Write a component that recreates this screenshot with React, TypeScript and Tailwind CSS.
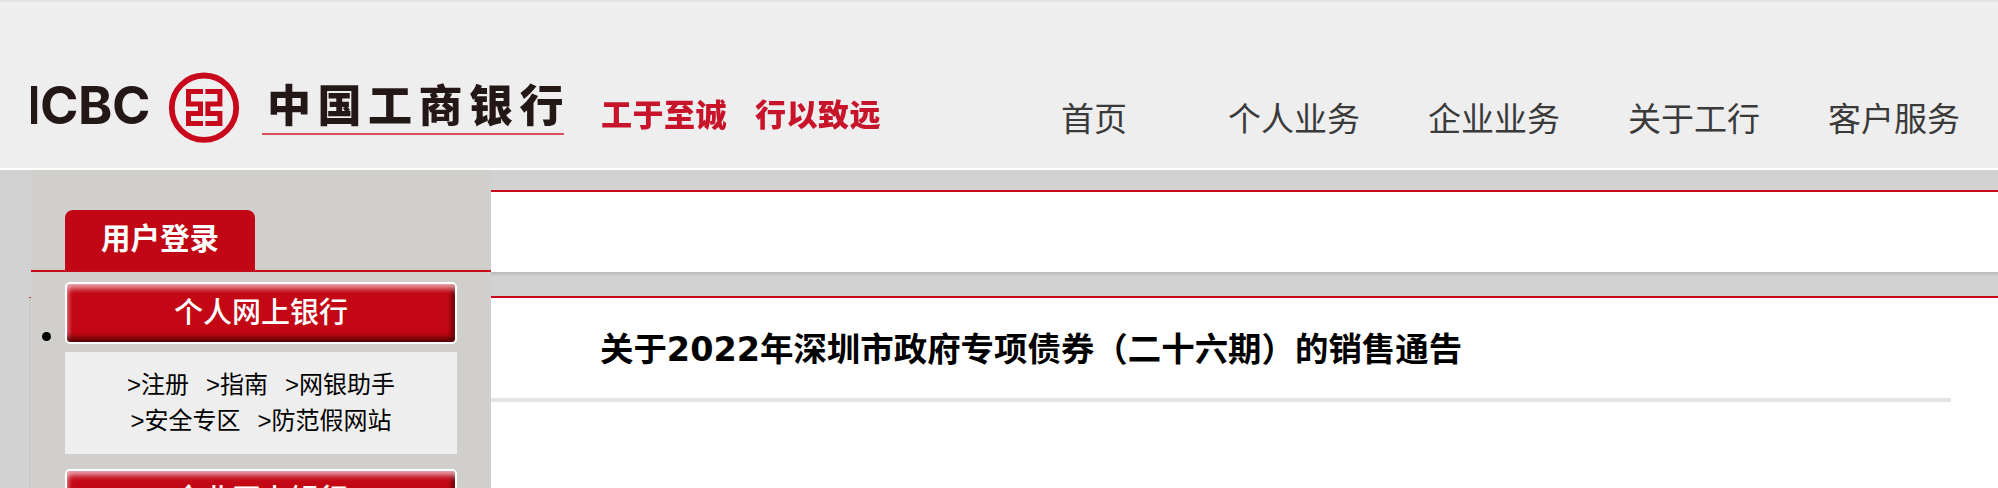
const baseFont = "font-['DejaVu_Sans','Noto_Sans_CJK_SC',sans-serif]";

const navItems = ["首页", "个人业务", "企业业务", "关于工行", "客户服务"];

function Emblem() {
  const left = "M26 22H43V27H31V34.5H43V49H31V54H43V59H26V44H38V39.5H26Z";
  const right = "M62.4 22H45.4V27H57.4V34.5H45.4V49H57.4V54H45.4V59H62.4V44H50.4V39.5H62.4Z";
  return (
    <svg width="90" height="80" viewBox="0 0 90 80" className="shrink-0">
      <circle cx="44" cy="40.7" r="32.2" fill="none" stroke="#c8091c" strokeWidth="5.8" />
      <path d={left} fill="#c8091c" />
      <path d={right} fill="#c8091c" />
    </svg>
  );
}

function Logo() {
  return (
    <div className="flex items-center blur-[0.6px] h-[80px] mt-[65px]">
      <div className="w-[129px] overflow-hidden font-['Inter',sans-serif] font-bold text-[52px] leading-none text-[#231815] mt-[-2px]">
        <div className="ml-[-5px] tracking-[-0.5px]">ICBC</div>
      </div>
      <Emblem />
      <div className="ml-[12px] w-[302px] border-b-2 border-[#d9505c] mt-[-2px] pb-[5px]">
        <div className="pl-[5px] font-['Noto_Sans_CJK_SC',sans-serif] font-black text-[44px] leading-[50px] tracking-[6.5px] text-[#231815] whitespace-nowrap">
          中国工商银行
        </div>
      </div>
      <div className="ml-[37px] mt-[11px] flex gap-[28px] font-['Noto_Sans_CJK_SC',sans-serif] font-black text-[31px] leading-none text-[#c8142a] tracking-[0.5px] whitespace-nowrap">
        <span>工于至诚</span>
        <span>行以致远</span>
      </div>
    </div>
  );
}

function RedButton({ label }: { label: string }) {
  return (
    <div className="h-[62px] rounded-[5px] border-2 border-white bg-[#c30714] shadow-[inset_0_8px_6px_-4px_#eeb0b8,inset_0_-8px_6px_-4px_#4a0004,inset_-6px_0_5px_-3px_#5a0006,inset_4px_0_5px_-3px_#e8a0a8] flex items-center justify-center text-white font-medium text-[29px] leading-none">
      {label}
    </div>
  );
}

function Sidebar() {
  return (
    <aside className="w-[460px] shrink-0 bg-[#d0cfcb] relative">
      <div className="pt-[40px] border-b-2 border-[#c8091c]">
        <div className="ml-[34px] w-[190px] h-[60px] rounded-t-[8px] bg-[#c10715] flex items-center justify-center text-white font-bold text-[29.5px] leading-none">
          用户登录
        </div>
      </div>
      <span className="absolute left-[11px] top-[162px] size-[9px] rounded-full bg-black" />
      <div className="ml-[34px] w-[392px] pt-[10px]">
        <RedButton label="个人网上银行" />
        <div className="mt-[8px] h-[102px] bg-[#eeeeee] flex flex-col justify-center items-center text-black text-[24px] leading-[36px] font-['Liberation_Sans','Noto_Sans_CJK_SC',sans-serif]">
          <div className="flex gap-[17px]">
            <span>&gt;注册</span>
            <span>&gt;指南</span>
            <span>&gt;网银助手</span>
          </div>
          <div className="flex gap-[17px]">
            <span>&gt;安全专区</span>
            <span>&gt;防范假网站</span>
          </div>
        </div>
        <div className="mt-[15px]">
          <RedButton label="企业网上银行" />
        </div>
      </div>
    </aside>
  );
}

export default function App() {
  return (
    <div className={`h-[488px] w-[1998px] overflow-hidden bg-[#d2d2d2] ${baseFont}`}>
      <header className="h-[170px] border-t-2 border-b-2 border-t-[#e4e4e4] border-b-white bg-[#eeeeee] pl-[31px] flex justify-between">
        <Logo />
        <nav className="flex pr-[4px] items-start pt-[90px]">
          {navItems.map((item) => (
            <a key={item} className="w-[200px] text-center text-[33px] leading-[50px] text-[#3a3a3a] font-['Noto_Sans_CJK_SC',sans-serif] font-normal">
              {item}
            </a>
          ))}
        </nav>
      </header>
      <div className="flex h-[318px]">
        <div className="w-[31px] shrink-0 flex justify-end">
          <div className="w-[2px] h-[191px] mt-[127px] border-t border-[#d0303c] bg-[#cbcbc9]" />
        </div>
        <Sidebar />
        <main className="flex-1 min-w-0">
          <div className="mt-[20px] h-[82px] border-t-2 border-[#c8091c] bg-white" />
          <div className="h-[24px] bg-gradient-to-b from-[#b9b9b9] from-0% to-[#d2d2d2] to-20%" />
          <div className="h-[192px] border-t-2 border-[#c8091c] bg-white">
            <div className="h-[104px] w-[1460px] border-b-4 border-[#e4e4e4] pl-[109px] pt-[28px]">
              <h1 className="text-[33.45px] leading-[48px] font-bold text-black whitespace-nowrap">
                关于2022年深圳市政府专项债券（二十六期）的销售通告
              </h1>
            </div>
          </div>
        </main>
      </div>
    </div>
  );
}
